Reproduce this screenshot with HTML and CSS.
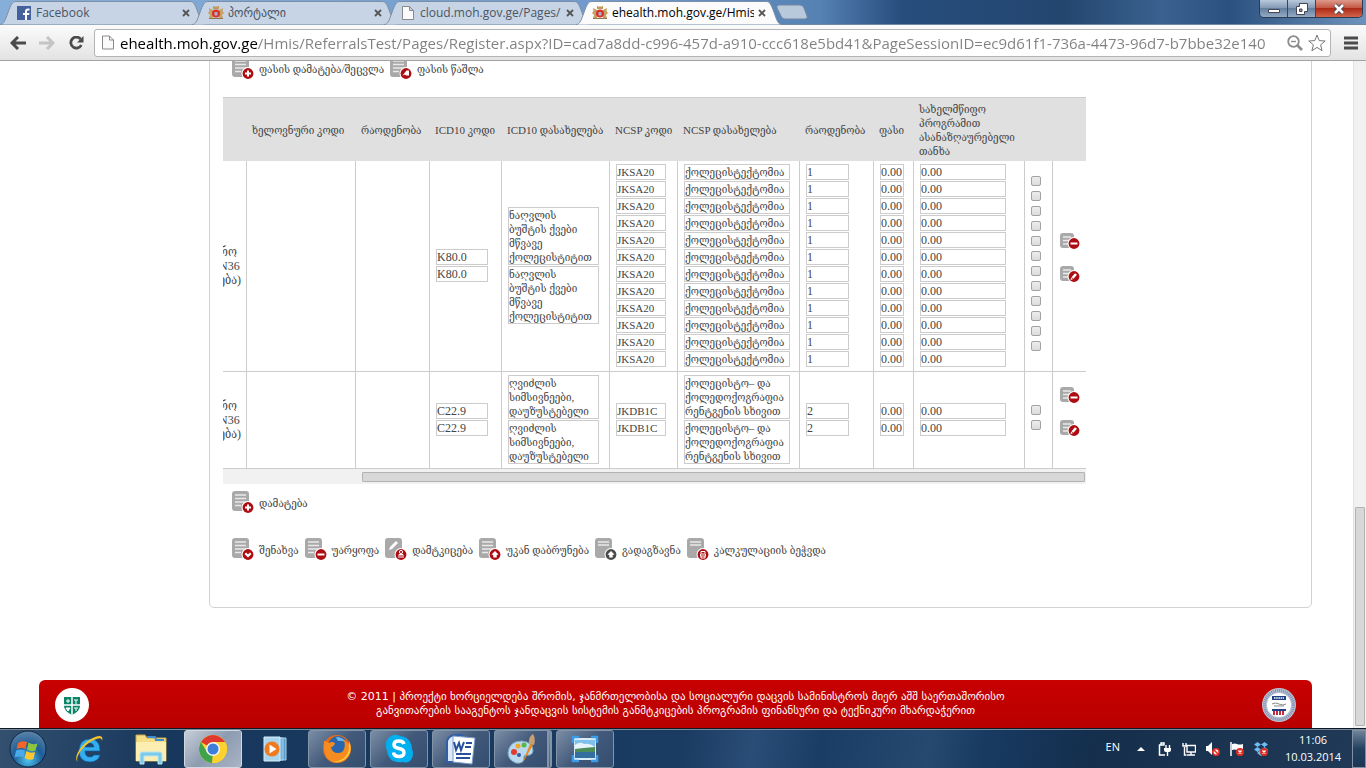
FILE: index.html
```html
<!DOCTYPE html>
<html lang="ka">
<head>
    <meta charset="UTF-8">
    <meta name="viewport" content="width=device-width, initial-scale=1.0">
    <title>ehealth.moh.gov.ge</title>
    <link rel="stylesheet" href="styles.css">
</head>
<body>
    <!-- Shared icons -->
    <svg class="sprite" width="0" height="0" aria-hidden="true">
        <defs>
            <symbol id="doc" viewBox="0 0 22 22">
                <rect x="0" y="0" width="17" height="20" rx="3" fill="#a9a9a9"/>
                <path d="M3 4h11M3 7.500h11M3 11h11M3 14.500h6" stroke="#e9e9e9" stroke-width="1.500"/>
            </symbol>
            <symbol id="doc-small" viewBox="0 0 20 18">
                <rect x="0" y="0" width="14" height="15" rx="3" fill="#a9a9a9"/>
                <path d="M3 4h8M3 7.500h8M3 11h6" stroke="#e9e9e9" stroke-width="1.500"/>
            </symbol>
            <symbol id="doc-head" viewBox="0 0 22 22">
                <rect x="0" y="0" width="17" height="20" rx="3" fill="#a9a9a9"/>
                <path d="M3 4h11M3 7h11" stroke="#e9e9e9" stroke-width="1.500"/>
            </symbol>
            <symbol id="doc-pen" viewBox="0 0 22 22">
                <rect x="0" y="0" width="17" height="20" rx="3" fill="#a9a9a9"/>
                <path d="M4 12l1-3 6-6 2 2-6 6z" fill="#fff"/>
            </symbol>
            <symbol id="badge" viewBox="0 0 22 22">
                <circle cx="16" cy="16.500" r="6.500" fill="#fff"/>
                <circle cx="16" cy="16.500" r="5.400" fill="currentColor"/>
            </symbol>
            <symbol id="plus" viewBox="0 0 22 22"><path d="M16 13.500v6M13 16.500h6" stroke="#fff" stroke-width="2"/></symbol>
            <symbol id="minus" viewBox="0 0 22 22"><path d="M12.500 16.500h7" stroke="#fff" stroke-width="2"/></symbol>
            <symbol id="check" viewBox="0 0 22 22"><path d="M13.300 15.300l2.700 2.700 2.700-2.700" stroke="#fff" stroke-width="2.200" fill="none"/></symbol>
            <symbol id="erase" viewBox="0 0 22 22"><path d="M12.500 18.500l4-5 2.500 0v5h-3l-1-1z" fill="#fff"/></symbol>
            <symbol id="person" viewBox="0 0 22 22"><circle cx="16" cy="14" r="1.600" fill="none" stroke="#fff"/><path d="M14 20v-3.500h4V20M16 17v3" stroke="#fff" fill="none"/></symbol>
            <symbol id="up" viewBox="0 0 22 22"><path d="M16 13l3.500 3.500-1.800.5v2.500h-3.400V17l-1.800-.5z" fill="#fff"/></symbol>
            <symbol id="print" viewBox="0 0 22 22"><path d="M14 15.500v-2h4v2M13.500 16h5v2h-5zM14 18v2h4v-2" stroke="#fff" fill="none"/></symbol>
            <symbol id="pen" viewBox="0 0 22 22"><path d="M14.500 18l3.500-4" stroke="#fff" stroke-width="2.600"/><path d="M12.500 20l.6-2.500 1.900 1.700z" fill="#fff"/></symbol>
            <symbol id="crest" viewBox="0 0 16 14">
                <path d="M5 0h1l1 1 1-1 1 1 1-1h1v3H5z" fill="#c39a55"/>
                <path d="M1 2l2 1 2 1v8H1l1-3-2-2 1.500-2zM15 2l-2 1-2 1v8h4l-1-3 2-2-1.500-2z" fill="#c6a263"/>
                <path d="M1 12h14v1H1z" fill="#8d7750"/>
                <circle cx="8" cy="7.500" r="4" fill="#d9302c"/><path d="M6.500 6h3v3.500h-3z" fill="#a7b3c8"/>
            </symbol>
            <symbol id="sheet" viewBox="0 0 12 14"><path d="M.5.5h7l4 4v9H.5zM7.500.5v4h4" fill="#fafafa" stroke="#8a8a8a"/></symbol>
            <symbol id="close" viewBox="0 0 8 8"><path d="M1 1l6 6M7 1L1 7" stroke="#555" stroke-width="1.800"/></symbol>
            <symbol id="tab" viewBox="0 0 206 24"><path d="M0 24C4 24 5 20 8 12S12 1 16 1H190C194 1 195 4 198 12S202 24 206 24" fill="currentColor" stroke="#7e8fa5"/></symbol>
        </defs>
    </svg>

    <!-- Browser tabs -->
    <header class="titlebar">
        <div class="tab">
            <svg class="tab-shape"><use href="#tab"/></svg>
            <svg class="favicon" viewBox="0 0 14 14"><path d="M0 0h14v14H0z" fill="#45619d"/><path d="M8 14V9H6V7h2V5.500C8 3.500 9 2.500 11 2.500h1.500v2H11q-1 0-1 1V7h2.500l-.4 2H10v5z" fill="#fff"/></svg>
            <span class="tab-title">Facebook</span>
            <button class="tab-close" aria-label="Close tab"><svg><use href="#close"/></svg></button>
        </div>
        <div class="tab">
            <svg class="tab-shape"><use href="#tab"/></svg>
            <svg class="favicon"><use href="#crest"/></svg>
            <span class="tab-title">პორტალი</span>
            <button class="tab-close" aria-label="Close tab"><svg><use href="#close"/></svg></button>
        </div>
        <div class="tab">
            <svg class="tab-shape"><use href="#tab"/></svg>
            <svg class="favicon"><use href="#sheet"/></svg>
            <span class="tab-title">cloud.moh.gov.ge/Pages/</span>
            <button class="tab-close" aria-label="Close tab"><svg><use href="#close"/></svg></button>
        </div>
        <div class="tab active">
            <svg class="tab-shape"><use href="#tab"/></svg>
            <svg class="favicon"><use href="#crest"/></svg>
            <span class="tab-title">ehealth.moh.gov.ge/Hmis</span>
            <button class="tab-close" aria-label="Close tab"><svg><use href="#close"/></svg></button>
        </div>
        <button class="new-tab" aria-label="New tab"><svg viewBox="0 0 32 16"><path d="M3 1h21q3 0 4 3l3 8q1 3-2 3H9q-3 0-4-3L1 4Q0 1 3 1z" fill="#b9c9dc" stroke="#7187a3"/></svg></button>
        <div class="window-buttons">
            <button class="win-btn" aria-label="Minimize"><svg viewBox="0 0 14 12"><path d="M1.500 6.500h11v3h-11z" fill="#fff" stroke="#445"/></svg></button>
            <button class="win-btn" aria-label="Restore"><svg viewBox="0 0 14 12"><path d="M4.500.5h8v8h-3v3h-8v-8h3z" fill="#fff" stroke="#445"/><path d="M4.500 6h2.500v2.500H4.500z" fill="#89a" stroke="#445"/></svg></button>
            <button class="win-btn win-close" aria-label="Close"><svg viewBox="0 0 14 12"><path d="M3 2l8 8M11 2l-8 8" stroke="#445" stroke-width="4.500"/><path d="M3 2l8 8M11 2l-8 8" stroke="#fff" stroke-width="2.500"/></svg></button>
        </div>
    </header>

    <!-- Address bar -->
    <nav class="toolbar">
        <button class="nav-btn" aria-label="Back"><svg viewBox="0 0 16 14"><path d="M16 7H3M8 1L2 7l6 6" stroke="#4b4b4b" stroke-width="3" fill="none"/></svg></button>
        <button class="nav-btn" aria-label="Forward"><svg viewBox="0 0 16 14"><path d="M0 7h13M8 1l6 6-6 6" stroke="#c4c4c4" stroke-width="3" fill="none"/></svg></button>
        <button class="nav-btn" aria-label="Reload"><svg viewBox="0 0 16 14"><path d="M12.500 3A5.500 5.500 0 1 0 13.300 9" stroke="#4b4b4b" stroke-width="2.800" fill="none"/><path d="M15.500 0v6.500H9z" fill="#4b4b4b"/></svg></button>
        <div class="omnibox">
            <svg class="page-icon"><use href="#sheet"/></svg>
            <input class="url" type="text" aria-label="Address" value="ehealth.moh.gov.ge/Hmis/ReferralsTest/Pages/Register.aspx?ID=cad7a8dd-c996-457d-a910-ccc618e5bd41&amp;PageSessionID=ec9d61f1-736a-4473-96d7-b7bbe32e140">
            <button class="omni-btn" aria-label="Zoom"><svg viewBox="0 0 16 16"><circle cx="6.500" cy="6.500" r="5.300" fill="none" stroke="#8c8c8c" stroke-width="1.800"/><path d="M4 6.500h5" stroke="#8c8c8c" stroke-width="1.400"/><path d="M10.500 10.500l4.500 4.500" stroke="#8c8c8c" stroke-width="2.600"/></svg></button>
            <button class="omni-btn star" aria-label="Bookmark"><svg viewBox="0 0 18 18"><path d="M9 1l2.200 5.600 6 .4-4.600 3.800 1.500 5.900L9 13.400l-5.100 3.300 1.500-5.900L.8 7l6-.4z" fill="#fff" stroke="#777"/></svg></button>
        </div>
        <button class="menu-btn" aria-label="Menu"><svg viewBox="0 0 14 14"><path d="M0 2h14M0 7h14M0 12h14" stroke="#4b4b4b" stroke-width="3"/></svg></button>
    </nav>

    <div class="viewport">
        <main class="page">
            <section class="panel">
                <div class="actions">
                    <a href="#" class="action"><svg><use href="#doc"/><use href="#badge"/><use href="#plus"/></svg><span>ფასის დამატება/შეცვლა</span></a>
                    <a href="#" class="action"><svg><use href="#doc"/><use href="#badge"/><use href="#erase"/></svg><span>ფასის წაშლა</span></a>
                </div>

                <div class="table-box">
                    <div class="table-clip">
                        <table id="servicesTable">
                            <colgroup>
                                <col class="w-program"><col class="w-artificial"><col class="w-amount"><col class="w-icd"><col class="w-icd-name"><col class="w-ncsp">
                                <col class="w-ncsp-name"><col class="w-amount"><col class="w-price"><col class="w-sum"><col class="w-check"><col class="w-tools">
                            </colgroup>
                            <thead>
                                <tr>
                                    <th></th>
                                    <th>ხელოვნური კოდი</th>
                                    <th>რაოდენობა</th>
                                    <th>ICD10 კოდი</th>
                                    <th>ICD10 დასახელება</th>
                                    <th>NCSP კოდი</th>
                                    <th>NCSP დასახელება</th>
                                    <th>რაოდენობა</th>
                                    <th>ფასი</th>
                                    <th>სახელმწიფო<br>პროგრამით<br>ასანაზღაურებელი<br>თანხა</th>
                                    <th></th>
                                    <th></th>
                                </tr>
                            </thead>
                            <tbody></tbody>
                        </table>
                    </div>
                    <div class="hscroll"><div class="hthumb"></div></div>
                </div>

                <div class="actions add-row">
                    <a href="#" class="action"><svg><use href="#doc"/><use href="#badge"/><use href="#plus"/></svg><span>დამატება</span></a>
                </div>
                <div class="actions">
                    <a href="#" class="action"><svg><use href="#doc"/><use href="#badge"/><use href="#check"/></svg><span>შენახვა</span></a>
                    <a href="#" class="action"><svg><use href="#doc"/><use href="#badge"/><use href="#minus"/></svg><span>უარყოფა</span></a>
                    <a href="#" class="action"><svg><use href="#doc-pen"/><use href="#badge"/><use href="#person"/></svg><span>დამტკიცება</span></a>
                    <a href="#" class="action"><svg><use href="#doc"/><use href="#badge"/><use href="#up"/></svg><span>უკან დაბრუნება</span></a>
                    <a href="#" class="action"><svg class="dark"><use href="#doc-head"/><use href="#badge"/><use href="#up"/></svg><span>გადაგზავნა</span></a>
                    <a href="#" class="action"><svg><use href="#doc-head"/><use href="#badge"/><use href="#print"/></svg><span>კალკულაციის ბეჭვდა</span></a>
                </div>
            </section>

            <footer class="footer">
                <svg class="seal" viewBox="0 0 34 34">
                    <circle cx="17" cy="17" r="17" fill="#fff"/>
                    <path d="M9 9h16v9q0 5-8 9-8-4-8-9z" fill="#0b8468"/>
                    <path d="M17 9v18M9 17h16" stroke="#fff" stroke-width="1.500"/>
                    <path d="M13 11v4M11 13h4M19 12h4M21 12v4M11 20h4l-2 3zM19 20h4M21 20v3" stroke="#fff" fill="#fff"/>
                </svg>
                <p>© 2011 | პროექტი ხორციელდება შრომის, ჯანმრთელობისა და სოციალური დაცვის სამინისტროს მიერ აშშ საერთაშორისო<br>განვითარების სააგენტოს ჯანდაცვის სისტემის განმტკიცების პროგრამის ფინანსური და ტექნიკური მხარდაჭერით</p>
                <svg class="seal" viewBox="0 0 34 34">
                    <circle cx="17" cy="17" r="17" fill="#b9c1d2"/>
                    <circle cx="17" cy="17" r="14.500" fill="none" stroke="#7f8fb3" stroke-width="3" stroke-dasharray="1 1"/>
                    <circle cx="17" cy="17" r="12" fill="#fff"/>
                    <path d="M10 8h14v4H10z" fill="#1f3f86"/><path d="M12 10h10" stroke="#fff" stroke-dasharray="1.500 .7" stroke-width="1.500"/>
                    <path d="M10 16q3-2 7 0t7 0M12 18h10" stroke="#888" fill="none"/>
                    <path d="M10 21h14v2H10z" fill="#1f3f86"/><path d="M11 25h12" stroke="#c22c3c" stroke-width="4" stroke-dasharray="2 1"/>
                </svg>
            </footer>
        </main>
        <div class="vscroll"><div class="vthumb"></div></div>
    </div>

    <!-- Taskbar -->
    <footer class="taskbar">
        <button class="task start" aria-label="Start"><svg viewBox="0 0 38 38"><defs><radialGradient id="orb" cx=".5" cy=".8" r=".8"><stop offset="0" stop-color="#4fc4f0"/><stop offset=".5" stop-color="#1d5d96"/><stop offset="1" stop-color="#5d84a8"/></radialGradient></defs><circle cx="19" cy="19" r="18" fill="url(#orb)" stroke="#0c2743"/><path d="M9 13q4-3 9-1l-1.500 7q-4-2-9 0z" fill="#f0652a"/><path d="M19.500 12.500q4 3 9 1l-2 7q-4 2-8.500-1z" fill="#8cc63e"/><path d="M7 20.500q4-2 9 0l-1.500 7q-4-2-9 0z" fill="#4aa9e9"/><path d="M17.500 21q4 3 8.500 1l-1.500 7q-4 2-9-1z" fill="#fdc72f"/></svg></button>
        <button class="task" aria-label="Internet Explorer"><svg viewBox="0 0 32 32"><path d="M27 18H12q0 6 5 6 3 0 4-2h6q-2 7-10 7-11 0-11-12Q7 6 17 6q10 0 10 12zM12 14h9q-.5-4-4.500-4T12 14z" fill="#35aef0" stroke="#0d5ea8" stroke-width=".7"/><path d="M5 29C-1 25 9 9 22 4q9-3 7 4 0-5-8-1C11 11 1 25 5 29z" fill="#f4c22c"/></svg></button>
        <button class="task" aria-label="Explorer"><svg viewBox="0 0 32 32"><path d="M1 5V2h9l2 3h19v23H1z" fill="#f4dd87" stroke="#c9a64a"/><path d="M12 4h8l1 3h8" stroke="#3b8ed0" stroke-width="2" fill="none"/><path d="M1 9h30v19H1z" fill="#fbeeb0"/><path d="M5 31V21q0-2 2-2h18q2 0 2 2v10h-4v-8H9v8z" fill="#7ecbe9" stroke="#b9e6f5"/></svg></button>
        <button class="task open current" aria-label="Chrome"><svg viewBox="0 0 32 32"><circle cx="16" cy="16" r="14" fill="#fbd22f"/><path d="M16 16L3.900 9A14 14 0 0 1 28.100 9H16z" fill="#de3a30"/><path d="M16 16l-1 14A14 14 0 0 1 3.900 9L10 19z" fill="#3fa34c"/><path d="M16 9h12A14 14 0 0 1 15 30l7-12z" fill="#fbd22f"/><circle cx="16" cy="16" r="7" fill="#f4f4f4"/><circle cx="16" cy="16" r="5.500" fill="#3d7edb"/></svg></button>
        <button class="task" aria-label="Media Player"><svg viewBox="0 0 32 32"><path d="M12 5h15v22H12z" fill="#5b9bc9" stroke="#a9d2ec"/><path d="M8 5h16v22H8z" fill="#6fb1dc" stroke="#a9d2ec"/><path d="M5 4h16v24H5z" fill="#a8d4ee" stroke="#d9eefa"/><circle cx="13" cy="16" r="7.500" fill="#f07a1d"/><path d="M10.500 11.500l7 4.500-7 4.500z" fill="#fff"/></svg></button>
        <button class="task open" aria-label="Firefox"><svg viewBox="0 0 32 32"><circle cx="16" cy="16" r="14" fill="#e66a13"/><circle cx="17" cy="13" r="10" fill="#2a66ae"/><path d="M15 4q7 0 9 5-4-2-7-1z" fill="#6fb9e8"/><path d="M3 8q3 0 5 2 3-2 6 0-1 4-4 4 1 6 7 6 5 0 6-4 2-5-1-10 8 4 7 12-2 11-13 12Q1 29 3 8z" fill="#f68b1f"/><path d="M28 8q4 9-1 15-6 8-15 5 13 1 16-12z" fill="#fbcf3e"/></svg></button>
        <button class="task open" aria-label="Skype"><svg viewBox="0 0 32 32"><path d="M10 2q4-1 7 1 11 1 12 13 2 4 0 9-3 6-9 4Q6 31 4 18 0 6 10 2z" fill="#00aff0"/><path d="M21 11q-1-3-5-3-5 0-5 3.500 0 3 5 4t5 4q0 4-5 4-5 0-5.500-4" stroke="#fff" stroke-width="3.500" fill="none"/></svg></button>
        <button class="task open" aria-label="Word"><svg viewBox="0 0 32 32"><path d="M2 29V8q2-6 9-6h6v27z" fill="#dce9f8" stroke="#315ea5" stroke-width="2"/><path d="M8 3l22 2-3 26-19-2z" fill="#fff" stroke="#7e9cc9"/><path d="M9 9l2 8 3-7 2 7 3-8" stroke="#24509c" stroke-width="2" fill="none"/><path d="M21 10h6M20 14h6M11 21h15M11 25h14" stroke="#24509c" stroke-width="2"/></svg></button>
        <button class="task open stacked" aria-label="Paint"><svg viewBox="0 0 32 32"><path d="M3 20Q4 8 17 8q11 1 11 10-1 5-6 4-4 0-3 4-1 5-8 4-8-3-8-10z" fill="#b9d9ee" stroke="#7aa8c7"/><circle cx="9" cy="19" r="3" fill="#e23c2e"/><circle cx="13" cy="13" r="2.500" fill="#f2a72e"/><circle cx="19" cy="12" r="2.500" fill="#53b848"/><circle cx="14" cy="22" r="2" fill="#315ea5"/><path d="M17 31l8-20 3 1z" fill="#e88a22"/><path d="M24 11q-1-7 4-10 3 5 1 11z" fill="#c9a072"/></svg></button>
        <button class="task open" aria-label="Photo Viewer"><svg viewBox="0 0 32 32"><path d="M5 5h22v22H5z" fill="#d9ecf8"/><path d="M6 7h20v10H6z" fill="#7fc0ec"/><path d="M6 12q5-4 9-1 6-1 11 3v5H6z" fill="#e6f3fb"/><path d="M6 16q8-1 20-2v5H6z" fill="#4d8b57"/><path d="M6 19h20v6H6z" fill="#356f9f"/><path d="M4 10V4h6M22 4h6v6M28 22v6h-6M10 28H4v-6" stroke="#3c9be6" stroke-width="2.500" fill="none"/></svg></button>

        <div class="tray">
            <span class="lang">EN</span>
            <button class="tray-btn" aria-label="Show hidden icons"><svg viewBox="0 0 14 14"><path d="M3 9l4-4 4 4z" fill="#fff"/></svg></button>
            <button class="tray-btn" aria-label="Power"><svg viewBox="0 0 14 14"><path d="M7 13H1.500V3h5M3 3V1h3v2" fill="none" stroke="#fff" stroke-width="1.500"/><path d="M6 6h7v2q0 2-2 2H8Q6 10 6 8z" fill="#fff"/><path d="M8 3v3M11.500 3v3M9.500 10v4" stroke="#fff" stroke-width="1.400"/></svg></button>
            <button class="tray-btn" aria-label="Network"><svg viewBox="0 0 14 14"><path d="M5 3.500h8.500v6.500H5zM9 10v3M5 13h8M2.500 5v8h2M1 1v3h3V1" fill="none" stroke="#fff" stroke-width="1.400"/></svg></button>
            <button class="tray-btn" aria-label="Volume"><svg viewBox="0 0 14 14"><path d="M0 4h2l4-4v13L2 9H0z" fill="#fff"/><circle cx="10" cy="10" r="3.200" fill="#fff" stroke="#e02b20" stroke-width="1.600"/><path d="M8 8l4 4" stroke="#e02b20" stroke-width="1.600"/></svg></button>
            <button class="tray-btn" aria-label="Action Center"><svg viewBox="0 0 14 14"><path d="M1 0v14" stroke="#fff" stroke-width="1.500"/><path d="M2 2q3-1 5 0t6 0v6q-3 1-6 0t-5 0z" fill="#fff"/><circle cx="10" cy="10" r="4" fill="#dc2b20"/><path d="M8.500 8.500l3 3M11.500 8.500l-3 3" stroke="#fff" stroke-width="1.400"/></svg></button>
            <button class="tray-btn" aria-label="Dropbox"><svg viewBox="0 0 14 14"><path d="M3.500 0L7 2.500 3.500 5 0 2.500zM10.500 0L14 2.500 10.500 5 7 2.500zM3.500 5L7 7.500 3.500 10 0 7.500zM10.500 5L14 7.500 10.500 10 7 7.500zM3 11l4-3 4 3-4 3z" fill="#6dbcf2"/><circle cx="10" cy="10" r="4" fill="#dc2b20"/><path d="M8.500 8.500l3 3M11.500 8.500l-3 3" stroke="#fff" stroke-width="1.400"/></svg></button>
            <div class="clock"><span>11:06</span><span>10.03.2014</span></div>
            <button class="show-desktop" aria-label="Show desktop"></button>
        </div>
    </footer>

    <script src="script.js"></script>
</body>
</html>
```
FILE: styles.css
```css
* {
    box-sizing: border-box;
}
body {
    display: flex;
    flex-direction: column;
    height: 100vh;
    margin: 0;
    overflow: hidden;
    background-color: #fff;
    color: #444;
    font-family: "Liberation Serif", "DejaVu Serif Condensed", "DejaVu Serif", serif;
    font-size: 11px;
    line-height: 14px;
}
button {
    display: flex;
    align-items: center;
    justify-content: center;
    padding: 0;
    border: none;
    background: none;
    cursor: pointer;
}
.sprite {
    position: absolute;
}

/* browser window */
.titlebar {
    display: flex;
    flex: none;
    height: 25px;
    background: linear-gradient(to right, #86aed9, #6f9acb 45%, #5581b3 60%, #274d7c 66%, #23466f 78%, #3a618f 85%, #2a517f 90%, #6d93bd);
    border-bottom: 1px solid #6d87a5;
    font-family: "Open Sans", "DejaVu Sans", sans-serif;
    font-size: 12px;
}
.tab {
    position: relative;
    display: flex;
    align-items: center;
    gap: 4px;
    width: 206px;
    height: 25px;
    padding: 1px 16px 0 16px;
    margin-right: -14px;
    color: #c6d4e5;
}
.tab.active {
    z-index: 1;
    color: #fbfbfb;
}
.tab-shape {
    position: absolute;
    top: 0;
    left: 0;
    width: 206px;
    height: 25px;
}
.favicon {
    position: relative;
    flex: none;
    width: 16px;
    height: 14px;
}
.tab-title {
    position: relative;
    flex: 1;
    overflow: hidden;
    line-height: 20px;
    white-space: nowrap;
    color: #4c5563;
}
.active .tab-title {
    color: #000;
}
.tab-close {
    position: relative;
}
.tab-close svg {
    width: 8px;
    height: 8px;
}
.new-tab {
    align-self: center;
    margin-left: 8px;
}
.new-tab svg {
    width: 32px;
    height: 16px;
}
.window-buttons {
    display: flex;
    height: 18px;
    margin: 0 3px 0 auto;
    border: 1px solid #2b3c52;
    border-top: none;
    border-radius: 0 0 5px 5px;
    overflow: hidden;
}
.win-btn {
    width: 28px;
    background: linear-gradient(#b9c9db, #7f97b2 50%, #6480a0 50%, #93aac3);
    border-right: 1px solid #33465e;
}
.win-btn svg {
    width: 14px;
    height: 12px;
}
.win-close {
    width: 46px;
    border-right: none;
    background: linear-gradient(#dc9a8c, #c4513d 50%, #ad2a16 50%, #d2644a);
}
.toolbar {
    display: flex;
    flex: none;
    align-items: center;
    height: 36px;
    padding: 0 8px 0 3px;
    background: linear-gradient(#fbfbfb, #e3e3e3);
    border-bottom: 1px solid #a3a3a3;
}
.nav-btn {
    width: 29px;
    height: 28px;
}
.nav-btn svg {
    width: 16px;
    height: 14px;
}
.omnibox {
    display: flex;
    flex: 1;
    align-items: center;
    min-width: 0;
    height: 28px;
    margin: 0 13px 0 4px;
    padding: 0 4px 0 7px;
    border: 1px solid #b4b4b4;
    border-radius: 3px;
    background-color: #fff;
}
.page-icon {
    flex: none;
    width: 12px;
    height: 15px;
}
.url {
    flex: 1;
    min-width: 0;
    padding: 0;
    margin: 0 5px 0 6px;
    border: none;
    outline: none;
    background: linear-gradient(to right, #000 138px, #808080 138px);
    background-clip: text;
    -webkit-background-clip: text;
    color: transparent;
    font-family: "Open Sans", sans-serif;
    font-size: 15px;
}
.omni-btn svg {
    width: 16px;
    height: 16px;
}
.star {
    margin-left: 5px;
}
.omni-btn.star svg {
    width: 18px;
    height: 18px;
}
.menu-btn svg {
    width: 14px;
    height: 14px;
}

/* page */
.viewport {
    display: flex;
    flex: 1;
    min-height: 0;
    overflow: hidden;
}
.page {
    flex: 1;
    min-width: 0;
    padding: 0 41px 0 39px;
}
.panel {
    margin: -25px 0 72px 170px;
    padding: 20px 13px 47px;
    border: 1px solid #d2d2d2;
    border-radius: 5px;
}
.actions {
    display: flex;
    gap: 6px;
    padding-left: 9px;
}
.action {
    display: flex;
    gap: 5px;
    height: 22px;
    color: #444;
    text-decoration: none;
    white-space: nowrap;
}
.action svg {
    width: 22px;
    height: 22px;
    color: #ad0d12;
}
.action .dark {
    color: #4a4a4a;
}
.action span {
    padding-top: 5px;
}
.add-row {
    margin: 7px 0 25px;
}
.table-box {
    max-width: 863px;
    margin-top: 18px;
}
.table-clip {
    display: flex;
    justify-content: flex-end;
    overflow: hidden;
}
table {
    flex: none;
    width: 872px;
    table-layout: fixed;
    border-collapse: separate;
    border-spacing: 0;
}
.w-program { width: 33px; }
.w-artificial { width: 109px; }
.w-amount { width: 74px; }
.w-icd { width: 72px; }
.w-icd-name { width: 108px; }
.w-ncsp { width: 68px; }
.w-ncsp-name { width: 122px; }
.w-price { width: 40px; }
.w-sum { width: 111px; }
.w-check { width: 28px; }
.w-tools { width: 33px; }
th {
    height: 64px;
    padding: 3px 5px;
    background-color: #e0e0e0;
    border-top: 1px solid #ccc;
    font-weight: normal;
    text-align: left;
    white-space: nowrap;
}
td {
    padding: 3px 6px 4px;
    border-right: 1px solid #ccc;
    border-bottom: 1px solid #ccc;
    vertical-align: middle;
}
td:first-child {
    padding: 3px 5px;
    font-size: 12px;
    white-space: nowrap;
}
td:last-child {
    border-right: none;
}
.stack {
    display: flex;
    flex-direction: column;
    gap: 1px;
}
.field {
    display: block;
    height: 16px;
    margin: 0;
    padding: 0;
    border: 1px solid #ccc;
    border-radius: 0;
    outline: none;
    resize: none;
    overflow: hidden;
    background-color: #fff;
    color: #444;
    font-family: inherit;
    font-size: 12px;
    line-height: 14px;
    white-space: pre;
}
.icd { width: 52px; }
.ncsp { width: 50px; font-size: 11px; }
.icd-name { width: 91px; font-size: 11px; }
.ncsp-name { width: 106px; font-size: 11px; }
.qty { width: 43px; }
.price { width: 24px; }
.sum { width: 86px; }
.lines-3 { height: 44px; }
.lines-4 { height: 58px; }
.checks {
    display: flex;
    flex-direction: column;
    gap: 5px;
    padding-bottom: 5px;
}
.checks input {
    appearance: none;
    width: 10px;
    height: 10px;
    margin: 0;
    border: 1px solid #a2a2a2;
    border-radius: 2px;
    background: linear-gradient(#ededed, #dcdcdc);
}
.tools {
    display: flex;
    flex-direction: column;
    gap: 15px;
    padding: 0 0 15px 1px;
}
.tools svg {
    display: block;
    width: 20px;
    height: 18px;
    color: #ad0d12;
}
.hscroll {
    display: flex;
    justify-content: flex-end;
    padding: 3px 1px 2px;
    background-color: #f1f1f1;
}
.hthumb {
    width: 84%;
    height: 10px;
    border: 1px solid #b2b2b2;
    border-radius: 1px;
    background-color: #d8d8d8;
}
.vscroll {
    display: flex;
    flex: none;
    flex-direction: column;
    justify-content: flex-end;
    width: 13px;
    padding: 2px 1px;
    background-color: #f1f1f1;
    border-left: 1px solid #e2e2e2;
}
.vthumb {
    height: 33%;
    border: 1px solid #b2b2b2;
    border-radius: 1px;
    background-color: #d8d8d8;
}
.footer {
    display: flex;
    justify-content: space-between;
    padding: 8px 16px;
    border-radius: 6px 6px 0 0;
    background: linear-gradient(#c80000, #b80000);
    color: #fff;
    font-family: "DejaVu Sans", sans-serif;
    font-size: 11px;
    text-align: center;
}
.footer p {
    margin: 2px 0 0;
}
.seal {
    width: 34px;
    height: 34px;
}

/* taskbar */
.taskbar {
    display: flex;
    flex: none;
    gap: 4px;
    height: 40px;
    background: linear-gradient(100deg, #33506f, #17375c 12%, #1a3b62 50%, #2a4d77 55%, #1a3d66 60%, #25496f 68%, #183a62 72%, #142e4c 80%, #203a57);
    border-top: 1px solid #0c1929;
    box-shadow: inset 0 1px 0 #7a8898;
    font-family: "Open Sans", sans-serif;
    color: #fff;
}
.task {
    width: 58px;
    margin-top: 1px;
    border-radius: 3px;
}
.task svg {
    width: 32px;
    height: 32px;
}
.start {
    width: 56px;
}
.start svg {
    width: 38px;
    height: 38px;
}
.open {
    border: 1px solid #8494a8;
    background: linear-gradient(135deg, #7c8ea6, #42597a 50%, #344e70);
}
.current {
    background: linear-gradient(135deg, #c7ced8, #8d9bb0 50%, #a9b4c4);
    border-color: #d2d8e0;
}
.stacked {
    border-right: 5px double #8494a8;
}
.tray {
    display: flex;
    align-items: center;
    gap: 10px;
    margin-left: auto;
    font-size: 11px;
}
.lang {
    margin-right: 4px;
    padding-bottom: 4px;
}
.tray-btn svg {
    width: 14px;
    height: 14px;
}
.clock {
    display: flex;
    flex-direction: column;
    gap: 3px;
    width: 66px;
    margin-left: 2px;
    text-align: center;
}
.show-desktop {
    width: 14px;
    height: 38px;
    margin-left: -4px;
    border: 1px solid #8090a5;
    background: linear-gradient(#6f8299, #23405f 50%, #1d3755);
}
```
FILE: script.js
```js
const rows = [
    {
        program: ['რო', 'N36', 'ება)'],
        icd: Array(2).fill('K80.0'),
        icdName: Array(2).fill('ნაღვლის\nბუშტის ქვები\nმწვავე\nქოლეცისტიტით'),
        ncsp: Array(12).fill('JKSA20'),
        ncspName: Array(12).fill('ქოლეცისტექტომია'),
        qty: '1'
    },
    {
        program: ['რო', 'N36', 'ება)'],
        icd: Array(2).fill('C22.9'),
        icdName: Array(2).fill('ღვიძლის\nსიმსივნეები,\nდაუზუსტებელი'),
        ncsp: Array(2).fill('JKDB1C'),
        ncspName: Array(2).fill('ქოლეცისტო– და\nქოლედოქოგრაფია\nრენტგენის სხივით'),
        qty: '2'
    }
];

function fields(values, name, label) {
    const items = values.map(value => {
        const lines = value.split('\n').length;
        if (lines > 1) {
            return `<textarea class="field ${name} lines-${lines}" aria-label="${label}">${value}</textarea>`;
        }
        return `<input type="text" class="field ${name}" aria-label="${label}" value="${value}">`;
    });
    return `<div class="stack">${items.join('')}</div>`;
}

function tool(name, label) {
    return `<a href="#" aria-label="${label}"><svg>
        <use href="#doc-small" width="20" height="18"/>
        <use href="#badge" x="-2" y="-6" width="22" height="22"/>
        <use href="#${name}" x="-2" y="-6" width="22" height="22"/>
    </svg></a>`;
}

const tableBody = document.querySelector('#servicesTable tbody');

rows.forEach(item => {
    const count = item.ncsp.length;
    const row = document.createElement('tr');
    row.innerHTML = `
        <td>${item.program.join('<br>')}</td>
        <td></td>
        <td></td>
        <td>${fields(item.icd, 'icd', 'ICD10 კოდი')}</td>
        <td>${fields(item.icdName, 'icd-name', 'ICD10 დასახელება')}</td>
        <td>${fields(item.ncsp, 'ncsp', 'NCSP კოდი')}</td>
        <td>${fields(item.ncspName, 'ncsp-name', 'NCSP დასახელება')}</td>
        <td>${fields(Array(count).fill(item.qty), 'qty', 'რაოდენობა')}</td>
        <td>${fields(Array(count).fill('0.00'), 'price', 'ფასი')}</td>
        <td>${fields(Array(count).fill('0.00'), 'sum', 'თანხა')}</td>
        <td><div class="checks">${'<input type="checkbox" aria-label="არჩევა">'.repeat(count)}</div></td>
        <td><div class="tools">${tool('minus', 'წაშლა')}${tool('pen', 'შეცვლა')}</div></td>
    `;
    tableBody.appendChild(row);
});
```
